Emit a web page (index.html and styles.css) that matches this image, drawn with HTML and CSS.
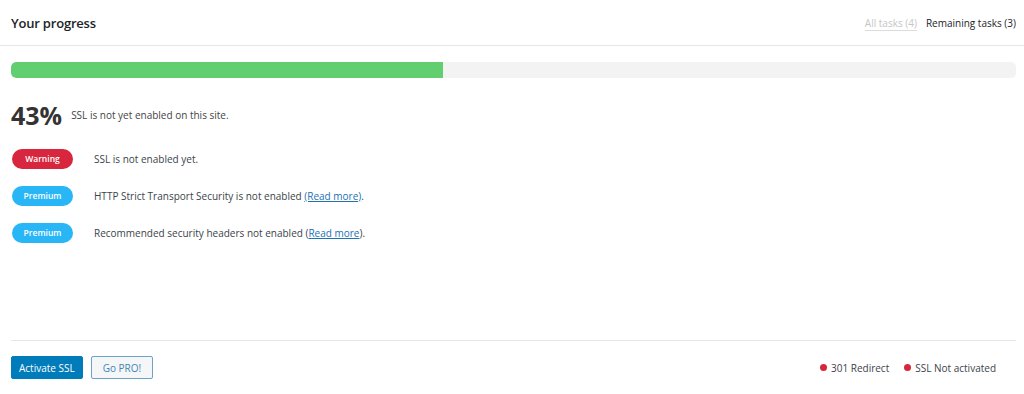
FILE: index.html
```html
<!DOCTYPE html>
<html lang="en">
<head>
    <meta charset="UTF-8">
    <meta name="viewport" content="width=device-width, initial-scale=1.0">
    <title>Your progress</title>
    <link rel="stylesheet" href="styles.css">
</head>
<body>
    <div class="block">
        <header class="block-header">
            <h3>Your progress</h3>
            <div class="task-filter">
                <a href="#" class="filter inactive">All tasks (4)</a>
                <a href="#" class="filter active">Remaining tasks (3)</a>
            </div>
        </header>
        <main class="block-content">
            <div class="progress-bar">
                <div class="progress-fill" style="width: 43%"></div>
            </div>
            <div class="progress-text">
                <span class="percentage">43%</span>
                <span class="progress-note">SSL is not yet enabled on this site.</span>
            </div>
            <ul class="task-list">
                <li class="task">
                    <span class="badge warning">Warning</span>
                    <span class="task-text">SSL is not enabled yet.</span>
                </li>
                <li class="task">
                    <span class="badge premium">Premium</span>
                    <span class="task-text">HTTP Strict Transport Security is not enabled <a href="#">(Read more)</a>.</span>
                </li>
                <li class="task">
                    <span class="badge premium">Premium</span>
                    <span class="task-text">Recommended security headers not enabled (<a href="#">Read more</a>).</span>
                </li>
            </ul>
        </main>
        <footer class="block-footer">
            <div class="buttons">
                <button class="button primary">Activate SSL</button>
                <button class="button secondary">Go PRO!</button>
            </div>
            <div class="status">
                <span class="status-item"><span class="dot"></span>301 Redirect</span>
                <span class="status-item"><span class="dot"></span>SSL Not activated</span>
            </div>
        </footer>
    </div>
</body>
</html>
```

FILE: styles.css
```css
* {
    box-sizing: border-box;
    margin: 0;
    padding: 0;
}

body {
    font-family: "Open Sans", "Noto Sans", Arial, sans-serif;
    font-size: 10px;
    color: #3c434a;
    background: #fff;
}

.block {
    width: 1024px;
    height: 394px;
    display: flex;
    flex-direction: column;
}

.block-header {
    height: 46px;
    border-bottom: 1px solid #e6e6e6;
    display: flex;
    align-items: center;
    justify-content: space-between;
    padding: 0 8px 0 11px;
}

.block-header h3 {
    font-size: 13px;
    font-weight: 600;
    color: #1d2327;
    letter-spacing: -0.2px;
}

.task-filter {
    display: flex;
    gap: 9px;
    padding-top: 2px;
}

.filter {
    text-decoration: none;
    font-size: 10px;
}

.filter.inactive {
    color: #c6c6c6;
    border-bottom: 1px solid #dcdcdc;
}

.filter.active {
    color: #1d2327;
}

.block-content {
    padding: 16px 8px 0 11px;
    flex: 1;
}

.progress-bar {
    height: 16px;
    background: #f3f3f3;
    border-radius: 5px;
    overflow: hidden;
}

.progress-fill {
    height: 100%;
    background: #61ce70;
    border-radius: 5px 0 0 5px;
}

.progress-text {
    display: flex;
    align-items: center;
    gap: 9px;
    margin-top: 20px;
}

.percentage {
    font-size: 25px;
    font-weight: 700;
    color: #333;
}

.progress-note {
    font-size: 10px;
    color: #444;
}

.task-list {
    list-style: none;
    margin-top: 8px;
}

.task {
    display: flex;
    align-items: center;
    height: 37px;
}

.badge {
    width: 61px;
    height: 20px;
    border-radius: 10px;
    margin-left: 1px;
    margin-right: 21px;
    display: flex;
    align-items: center;
    justify-content: center;
    color: #fff;
    font-size: 8.5px;
    font-weight: 600;
}

.badge.warning {
    background: #d7263d;
}

.badge.premium {
    background: #29b6f6;
}

.task-text {
    font-size: 10px;
    color: #3c434a;
}

.task-text a {
    color: #2271b1;
}

.block-footer {
    margin: 0 8px 0 11px;
    border-top: 1px solid #e6e6e6;
    height: 54px;
    display: flex;
    align-items: center;
    justify-content: space-between;
}

.buttons {
    display: flex;
    gap: 8px;
}

.button {
    height: 23px;
    padding: 0 7px;
    font-family: inherit;
    font-size: 10px;
    border-radius: 2px;
    cursor: pointer;
}

.button.primary {
    background: #007cba;
    border: 1px solid #007cba;
    color: #fff;
}

.button.secondary {
    background: #f5f6f7;
    border: 1px solid #6aa5c9;
    color: #3f86b5;
    padding: 0 11px;
}

.status {
    display: flex;
    gap: 15px;
    padding-right: 20px;
}

.status-item {
    display: flex;
    align-items: center;
    gap: 4px;
    font-size: 10px;
    color: #3c434a;
}

.dot {
    width: 7px;
    height: 7px;
    border-radius: 50%;
    background: #d7263d;
}
```
